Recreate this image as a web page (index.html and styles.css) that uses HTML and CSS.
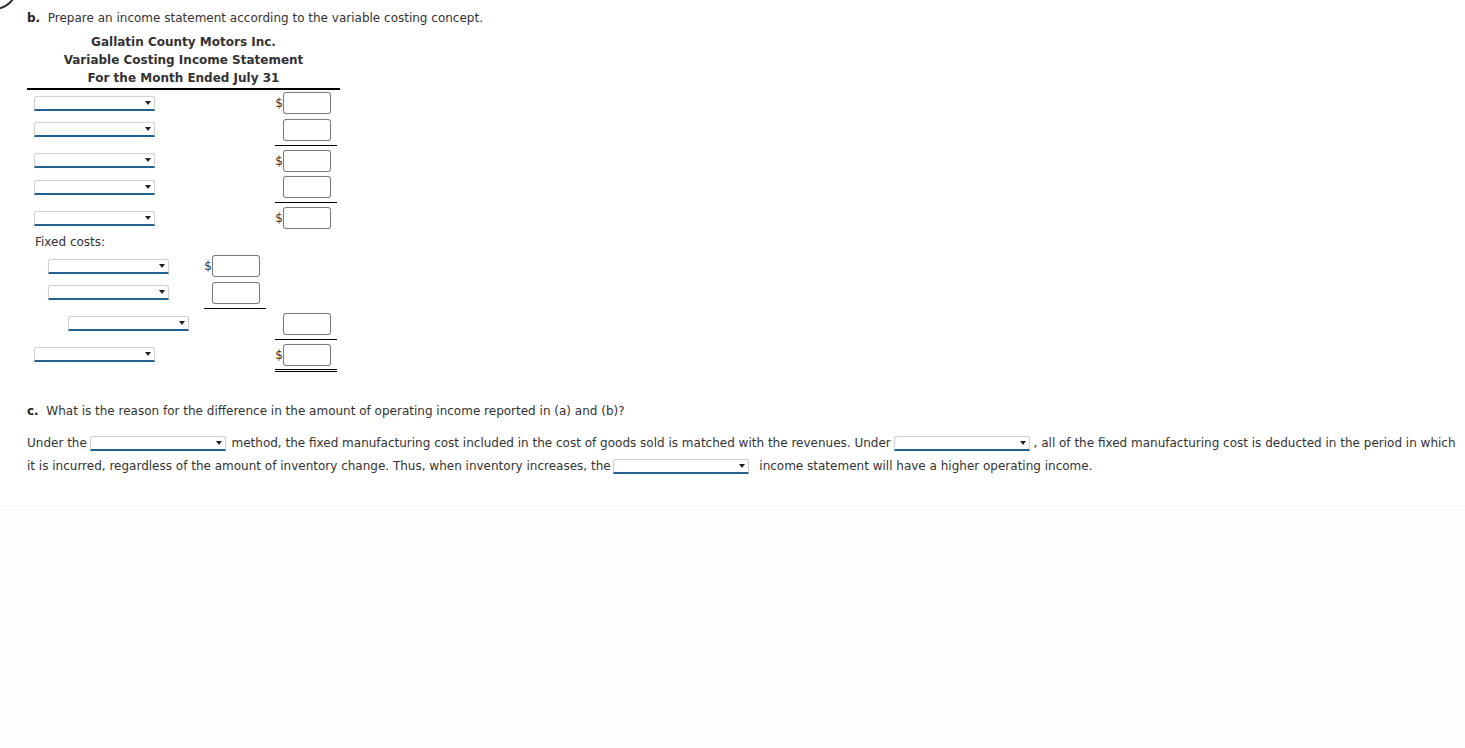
FILE: index.html
```html
<!DOCTYPE html>
<html lang="en">
<head>
<meta charset="utf-8">
<title>Variable Costing Income Statement</title>
<link rel="stylesheet" href="styles.css">
</head>
<body>
<svg class="corner" width="20" height="14" viewBox="0 0 20 14" aria-hidden="true"><circle cx="-6" cy="-14" r="23" fill="none" stroke="#333" stroke-width="2"/></svg>
<main class="page">
  <p class="part"><b>b.</b>&nbsp; Prepare an income statement according to the variable costing concept.</p>

  <div class="stmt">
    <div class="stmt-head">
      <div>Gallatin County Motors Inc.</div>
      <div>Variable Costing Income Statement</div>
      <div>For the Month Ended July 31</div>
    </div>
    <table class="grid">
      <colgroup><col class="c-label"><col class="c-mid"><col class="c-gap"><col class="c-right"><col class="c-end"></colgroup>
      <tbody>
        <tr>
          <td><span class="dd lv0" role="combobox" aria-label="line 1"></span></td>
          <td></td><td></td>
          <td><div class="amt"><span class="cur">$</span><input type="text" aria-label="amount 1"></div></td><td></td>
        </tr>
        <tr class="before-line">
          <td><span class="dd lv0" role="combobox" aria-label="line 2"></span></td>
          <td></td><td></td>
          <td class="ul"><div class="amt"><input type="text" aria-label="amount 2"></div></td><td></td>
        </tr>
        <tr class="after-line">
          <td><span class="dd lv0" role="combobox" aria-label="line 3"></span></td>
          <td></td><td></td>
          <td><div class="amt"><span class="cur">$</span><input type="text" aria-label="amount 3"></div></td><td></td>
        </tr>
        <tr class="before-line">
          <td><span class="dd lv0" role="combobox" aria-label="line 4"></span></td>
          <td></td><td></td>
          <td class="ul"><div class="amt"><input type="text" aria-label="amount 4"></div></td><td></td>
        </tr>
        <tr class="after-line">
          <td><span class="dd lv0" role="combobox" aria-label="line 5"></span></td>
          <td></td><td></td>
          <td><div class="amt"><span class="cur">$</span><input type="text" aria-label="amount 5"></div></td><td></td>
        </tr>
        <tr class="label-row">
          <td colspan="5"><span class="label">Fixed costs:</span></td>
        </tr>
        <tr>
          <td><span class="dd lv1" role="combobox" aria-label="fixed 1"></span></td>
          <td><div class="amt"><span class="cur">$</span><input type="text" aria-label="fixed amount 1"></div></td>
          <td></td><td></td><td></td>
        </tr>
        <tr class="before-line">
          <td><span class="dd lv1" role="combobox" aria-label="fixed 2"></span></td>
          <td class="ul"><div class="amt"><input type="text" aria-label="fixed amount 2"></div></td>
          <td></td><td></td><td></td>
        </tr>
        <tr class="after-line before-line">
          <td><span class="dd lv2" role="combobox" aria-label="total fixed"></span></td>
          <td></td><td></td>
          <td class="ul"><div class="amt"><input type="text" aria-label="total fixed amount"></div></td><td></td>
        </tr>
        <tr class="after-line total">
          <td><span class="dd lv0" role="combobox" aria-label="operating income"></span></td>
          <td></td><td></td>
          <td class="dbl"><div class="amt"><span class="cur">$</span><input type="text" aria-label="operating income amount"></div></td><td></td>
        </tr>
      </tbody>
    </table>
  </div>

  <p class="part part-c"><b>c.</b>&nbsp; What is the reason for the difference in the amount of operating income reported in (a) and (b)?</p>

  <p class="answer"><span>Under the</span> <span class="dd wide m1" role="combobox" aria-label="method 1"></span> <span>method, the fixed manufacturing cost included in the cost of goods sold is matched with the revenues. Under</span> <span class="dd wide m2" role="combobox" aria-label="method 2"></span><span>, all of the fixed manufacturing cost is deducted in the period in which</span> <span>it is incurred, regardless of the amount of inventory change. Thus, when inventory increases, the</span> <span class="dd wide m3" role="combobox" aria-label="method 3"></span> <span>income statement will have a higher operating income.</span></p>
</main>
<div class="footer-band"></div>
</body>
</html>
```

FILE: styles.css
```css
html, body {
  margin: 0;
  padding: 0;
  background: #fff;
}

body {
  font-family: "DejaVu Sans", Verdana, sans-serif;
  font-size: 12px;
  color: #333;
  position: relative;
}

.corner {
  position: absolute;
  left: 0;
  top: 0;
}

.page {
  padding: 9px 0 0 27px;
  height: 505px;
  box-sizing: border-box;
}

.part {
  margin: 0;
  line-height: 18px;
}

.part b {
  color: #222;
}

.stmt {
  width: 313px;
  margin-top: 6px;
}

.stmt-head {
  text-align: center;
  font-weight: bold;
  line-height: 18px;
  padding-bottom: 1px;
  border-bottom: 2px solid #000;
}

.grid {
  border-collapse: separate;
  border-spacing: 0;
  table-layout: fixed;
  width: 313px;
}

.c-label { width: 177px; }
.c-mid { width: 62px; }
.c-gap { width: 9px; }
.c-right { width: 62px; }
.c-end { width: 3px; }

.grid td {
  padding: 2.3px 0;
  vertical-align: middle;
  border-bottom: 0;
}

.grid tr.before-line td {
  padding-bottom: 4px;
  border-bottom: 1px solid transparent;
}

.grid tr.after-line td {
  padding-top: 4px;
}

.grid tr.before-line td.ul {
  border-bottom-color: #000;
}

.grid tr.total td {
  padding-bottom: 3px;
  border-bottom: 3px solid transparent;
}

.grid tr.total td.dbl {
  border-bottom: 3px double #000;
}

.grid tr.label-row td {
  padding: 0;
  height: 21px;
}

.label {
  display: block;
  padding-left: 8px;
  line-height: 21px;
}

.amt {
  display: flex;
  justify-content: flex-end;
  align-items: center;
  padding-right: 6px;
  height: 22px;
}

.cur {
  font-size: 12px;
  line-height: 12px;
}

.amt input {
  width: 48px;
  height: 22px;
  box-sizing: border-box;
  margin: 0;
  padding: 0 3px;
  border: 1px solid #7b7b7b;
  border-radius: 3px;
  box-shadow: 0 0 1px 0 #bbb;
  background: #fff;
  font: inherit;
}

/* dropdowns */
.dd {
  position: relative;
  display: inline-block;
  vertical-align: middle;
  width: 121px;
  height: 15px;
  box-sizing: border-box;
  border: 1px solid #d2d2d2;
  border-bottom: 2px solid #23618f;
  border-radius: 3px 3px 0 0;
  background: #fff;
  box-shadow: 0 0 1px rgba(0, 0, 0, 0.15);
}

.dd::after {
  content: "";
  position: absolute;
  right: 3px;
  top: 4px;
  border-left: 3.5px solid transparent;
  border-right: 3.5px solid transparent;
  border-top: 4px solid #222;
}

.dd.lv0 { margin-left: 7px; }
.dd.lv1 { margin-left: 21px; }
.dd.lv2 { margin-left: 41px; }

.dd.wide {
  width: 136px;
  margin: 0 0 0 -1px;
}

.dd.m1 { margin-right: 2px; }
.dd.m2 { margin-right: 4px; }
.dd.m3 { margin-right: 6px; }

.part-c {
  margin-top: 30px;
}

.answer {
  margin: 12px 0 0;
  line-height: 23px;
  padding-right: 2px;
}

.footer-band {
  height: 243px;
  border-top: 1px solid #f7f7f7;
  background: #fefefe;
}
```
